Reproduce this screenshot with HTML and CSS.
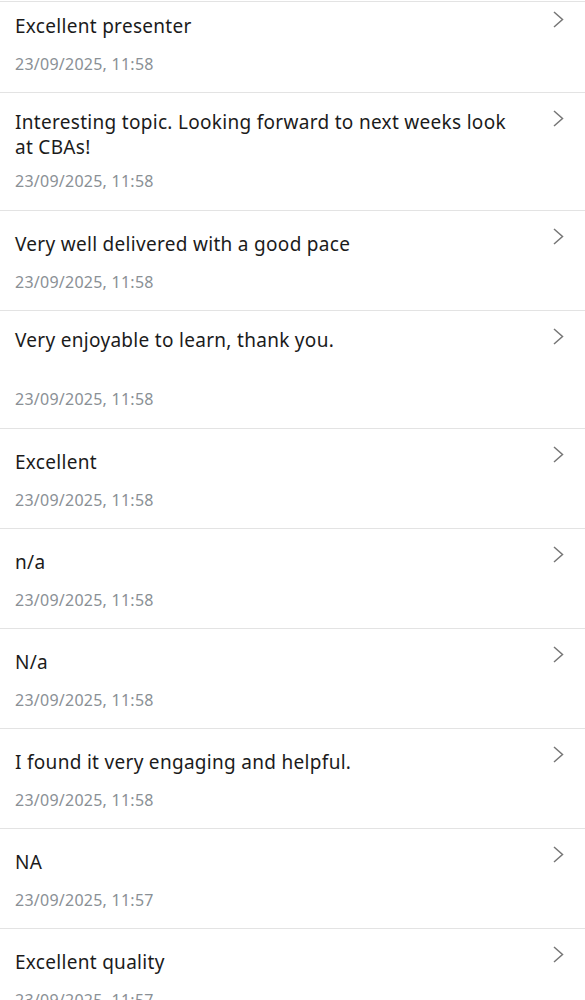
FILE: index.html
```html
<!DOCTYPE html>
<html lang="en">
<head>
    <meta charset="UTF-8">
    <meta name="viewport" content="width=device-width, initial-scale=1.0">
    <title>Responses</title>
    <link rel="stylesheet" href="styles.css">
</head>
<body>
    <ul class="response-list">
        <li class="response response-first">
            <div class="response-body">
                <div class="response-text">Excellent presenter</div>
                <div class="response-date">23/09/2025, 11:58</div>
            </div>
            <svg class="chevron" viewBox="0 0 11 17"><polyline points="1,1 9.5,8.5 1,16"/></svg>
        </li>
        <li class="response response-tall">
            <div class="response-body">
                <div class="response-text">Interesting topic. Looking forward to next weeks look at CBAs!</div>
                <div class="response-date">23/09/2025, 11:58</div>
            </div>
            <svg class="chevron" viewBox="0 0 11 17"><polyline points="1,1 9.5,8.5 1,16"/></svg>
        </li>
        <li class="response">
            <div class="response-body">
                <div class="response-text">Very well delivered with a good pace</div>
                <div class="response-date">23/09/2025, 11:58</div>
            </div>
            <svg class="chevron" viewBox="0 0 11 17"><polyline points="1,1 9.5,8.5 1,16"/></svg>
        </li>
        <li class="response response-tall">
            <div class="response-body">
                <div class="response-text">Very enjoyable to learn, thank you.<br>&nbsp;</div>
                <div class="response-date">23/09/2025, 11:58</div>
            </div>
            <svg class="chevron" viewBox="0 0 11 17"><polyline points="1,1 9.5,8.5 1,16"/></svg>
        </li>
        <li class="response">
            <div class="response-body">
                <div class="response-text">Excellent</div>
                <div class="response-date">23/09/2025, 11:58</div>
            </div>
            <svg class="chevron" viewBox="0 0 11 17"><polyline points="1,1 9.5,8.5 1,16"/></svg>
        </li>
        <li class="response">
            <div class="response-body">
                <div class="response-text">n/a</div>
                <div class="response-date">23/09/2025, 11:58</div>
            </div>
            <svg class="chevron" viewBox="0 0 11 17"><polyline points="1,1 9.5,8.5 1,16"/></svg>
        </li>
        <li class="response">
            <div class="response-body">
                <div class="response-text">N/a</div>
                <div class="response-date">23/09/2025, 11:58</div>
            </div>
            <svg class="chevron" viewBox="0 0 11 17"><polyline points="1,1 9.5,8.5 1,16"/></svg>
        </li>
        <li class="response">
            <div class="response-body">
                <div class="response-text">I found it very engaging and helpful.</div>
                <div class="response-date">23/09/2025, 11:58</div>
            </div>
            <svg class="chevron" viewBox="0 0 11 17"><polyline points="1,1 9.5,8.5 1,16"/></svg>
        </li>
        <li class="response">
            <div class="response-body">
                <div class="response-text">NA</div>
                <div class="response-date">23/09/2025, 11:57</div>
            </div>
            <svg class="chevron" viewBox="0 0 11 17"><polyline points="1,1 9.5,8.5 1,16"/></svg>
        </li>
        <li class="response">
            <div class="response-body">
                <div class="response-text">Excellent quality</div>
                <div class="response-date">23/09/2025, 11:57</div>
            </div>
            <svg class="chevron" viewBox="0 0 11 17"><polyline points="1,1 9.5,8.5 1,16"/></svg>
        </li>
    </ul>
</body>
</html>
```
FILE: styles.css
```css
body {
    margin: 0;
    background: #fff;
    font-family: "Noto Sans", Arial, sans-serif;
    overflow: hidden;
}
.response-list {
    list-style: none;
    margin: 1px 0 0;
    padding: 0;
    border-top: 1px solid #e3e3e3;
}
.response {
    display: flex;
    justify-content: space-between;
    align-items: flex-start;
    padding: 21px 21px 18px 15px;
    border-bottom: 1px solid #e3e3e3;
}
.response-body {
    flex: 1;
    padding-right: 30px;
}
.response-text {
    color: #1b1b1b;
    font-size: 19px;
    line-height: 25px;
    letter-spacing: 0.3px;
}
.response-date {
    margin-top: 15px;
    color: #8a9095;
    font-size: 16px;
    line-height: 20px;
    letter-spacing: 0.25px;
}
.response-tall {
    padding-top: 17px;
    padding-bottom: 19px;
}
.response-tall .response-date {
    margin-top: 11px;
}
.response-first {
    padding-top: 12px;
}
.chevron {
    flex: none;
    width: 11px;
    height: 17px;
    margin-top: -4px;
    fill: none;
    stroke: #767676;
    stroke-width: 1.5;
}
.response-tall .chevron {
    margin-top: 0;
}
.response-first .chevron {
    margin-top: -3px;
}
```
